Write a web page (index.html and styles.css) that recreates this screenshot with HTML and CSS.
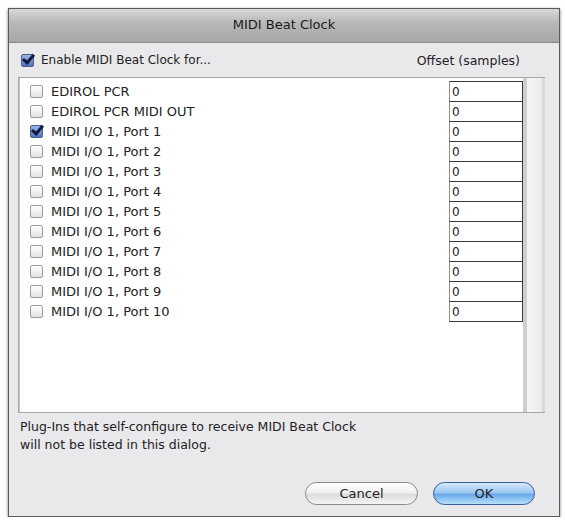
FILE: index.html
```html
<!DOCTYPE html>
<html lang="en">

<head>
    <meta charset="UTF-8">
    <title>MIDI Beat Clock</title>
    <link rel="stylesheet" href="styles.css">
</head>

<body>
    <div class="dialog">
        <div class="titlebar">MIDI Beat Clock</div>

        <div class="header">
            <label class="check-label">
                <span class="box checked"></span>
                Enable MIDI Beat Clock for...
            </label>
            <span class="offset-title">Offset (samples)</span>
        </div>

        <div class="list-wrap">
            <div class="list">
                <div class="row"><label class="check-label"><span class="box"></span>EDIROL PCR</label><input class="offset" type="text" value="0"></div>
                <div class="row"><label class="check-label"><span class="box"></span>EDIROL PCR MIDI OUT</label><input class="offset" type="text" value="0"></div>
                <div class="row"><label class="check-label"><span class="box checked"></span>MIDI I/O 1, Port 1</label><input class="offset" type="text" value="0"></div>
                <div class="row"><label class="check-label"><span class="box"></span>MIDI I/O 1, Port 2</label><input class="offset" type="text" value="0"></div>
                <div class="row"><label class="check-label"><span class="box"></span>MIDI I/O 1, Port 3</label><input class="offset" type="text" value="0"></div>
                <div class="row"><label class="check-label"><span class="box"></span>MIDI I/O 1, Port 4</label><input class="offset" type="text" value="0"></div>
                <div class="row"><label class="check-label"><span class="box"></span>MIDI I/O 1, Port 5</label><input class="offset" type="text" value="0"></div>
                <div class="row"><label class="check-label"><span class="box"></span>MIDI I/O 1, Port 6</label><input class="offset" type="text" value="0"></div>
                <div class="row"><label class="check-label"><span class="box"></span>MIDI I/O 1, Port 7</label><input class="offset" type="text" value="0"></div>
                <div class="row"><label class="check-label"><span class="box"></span>MIDI I/O 1, Port 8</label><input class="offset" type="text" value="0"></div>
                <div class="row"><label class="check-label"><span class="box"></span>MIDI I/O 1, Port 9</label><input class="offset" type="text" value="0"></div>
                <div class="row"><label class="check-label"><span class="box"></span>MIDI I/O 1, Port 10</label><input class="offset" type="text" value="0"></div>
            </div>
            <div class="scroll"></div>
        </div>

        <p class="note">Plug-Ins that self-configure to receive MIDI Beat Clock<br>will not be listed in this dialog.</p>

        <div class="buttons">
            <button class="btn">Cancel</button>
            <button class="btn default">OK</button>
        </div>
    </div>
</body>

</html>
```

FILE: styles.css
```css
body {
    margin: 0;
    background-color: #ffffff;
    font-family: 'DejaVu Sans', sans-serif;
    font-size: 12px;
    color: #222;
}

.dialog {
    margin: 8px 0 0 8px;
    width: 550px;
    height: 507px;
    background-color: #e9e8eb;
    border: 1px solid #5a5a5a;
    box-shadow: 0 1px 3px rgba(0, 0, 0, 0.5);
    display: flex;
    flex-direction: column;
}

.titlebar {
    height: 33px;
    line-height: 31px;
    text-align: center;
    font-size: 13px;
    color: #1a1a1a;
    background: linear-gradient(#d9d9d9, #b9b9b9 40%, #a6a6a6);
    border-bottom: 1px solid #8a8a8a;
}

.header {
    display: flex;
    justify-content: space-between;
    align-items: center;
    height: 34px;
    padding: 0 39px 0 12px;
}

.offset-title {
    font-size: 12.5px;
}

.check-label {
    display: flex;
    align-items: center;
    gap: 7px;
}

.box {
    width: 11px;
    height: 11px;
    border: 1px solid #9c9c9c;
    border-radius: 2px;
    background: linear-gradient(#ffffff, #e2e2e2);
    position: relative;
}

.box.checked {
    border-color: #4a5f8c;
    background: linear-gradient(#9bb5e6, #4f73c2);
}

.box.checked::after {
    content: "";
    position: absolute;
    left: 3px;
    top: -3px;
    width: 4px;
    height: 9px;
    border: solid #0e1a3a;
    border-width: 0 3px 3px 0;
    transform: rotate(40deg);
}

.list-wrap {
    display: flex;
    margin: 0 14px 0 9px;
    height: 334px;
    border: 1px solid #a8a8a8;
    border-right: none;
}

.list {
    flex: 1;
    background-color: #ffffff;
    padding: 3px 0 0 10px;
    border-left: 1px solid #c4c4c4;
}

.row {
    display: flex;
    justify-content: space-between;
    align-items: center;
    height: 20px;
    font-size: 13px;
}

.row .check-label {
    gap: 8px;
}

.offset {
    width: 74px;
    height: 21px;
    margin: 0 0 -1px 0;
    box-sizing: border-box;
    border: 1px solid #3a3a3a;
    border-left-color: #8c8c8c;
    padding: 1px 2px 0;
    font-family: 'DejaVu Sans', sans-serif;
    font-size: 12px;
    color: #222;
    background: #fff;
    outline: none;
}

.scroll {
    width: 22px;
    box-sizing: border-box;
    border-left: 4px solid #cfcfd2;
    border-right: 3px solid #d9d8dc;
    background: linear-gradient(90deg, #f6f6f8, #ecebee);
}

.note {
    margin: 5px 0 0 11px;
    line-height: 18px;
    font-size: 12.5px;
    color: #222;
}

.buttons {
    display: flex;
    justify-content: flex-end;
    gap: 15px;
    margin: 28px 24px 0 0;
}

.btn {
    height: 23px;
    border-radius: 12px;
    font-family: 'DejaVu Sans', sans-serif;
    font-size: 13px;
    color: #222;
    cursor: pointer;
    border: 1px solid #8a8a8a;
    background: linear-gradient(#ffffff, #f0f0f0 45%, #dcdcdc 55%, #f4f4f4);
    width: 113px;
}

.btn.default {
    width: 102px;
    border-color: #3c5c9a;
    background: linear-gradient(#d6e9fb, #9cc8f2 45%, #6aaaea 55%, #b6e0fb);
}
```
